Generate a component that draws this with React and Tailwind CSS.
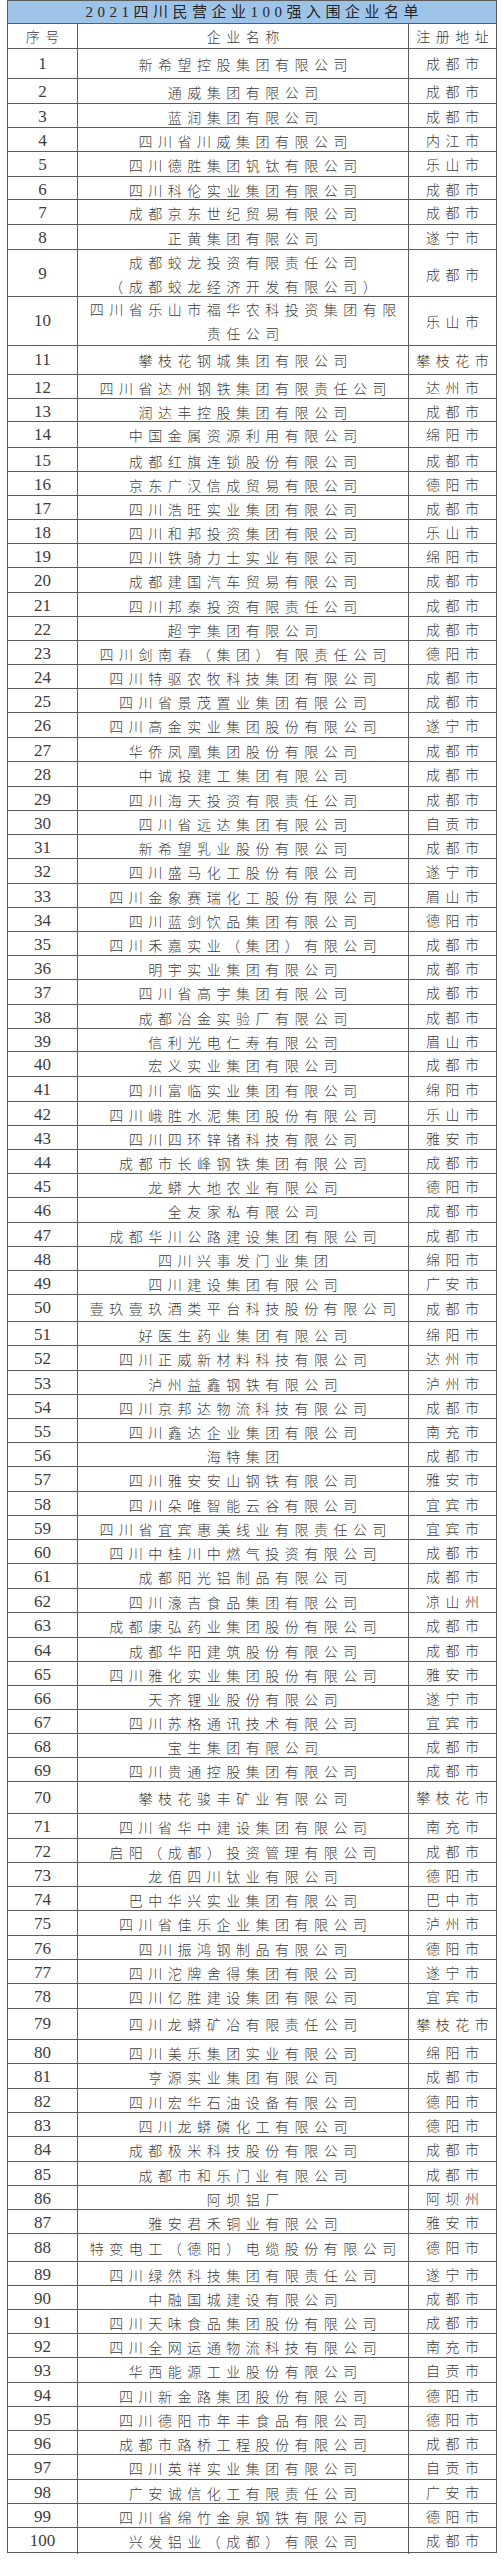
import React from "react";

const Y = [0, 24, 49, 79, 104, 128, 152, 177, 200, 225, 250, 297, 346, 375, 399, 422, 448, 472, 496, 520, 544, 568, 593, 617, 641, 665, 689, 713, 738, 762, 787, 811, 835, 859, 884, 908, 932, 956, 980, 1005, 1029, 1052, 1077, 1102, 1126, 1150, 1174, 1198, 1223, 1247, 1271, 1295, 1322, 1346, 1371, 1395, 1419, 1443, 1467, 1492, 1516, 1540, 1564, 1589, 1613, 1638, 1662, 1686, 1710, 1734, 1758, 1782, 1814, 1839, 1863, 1887, 1911, 1936, 1960, 1984, 2009, 2040, 2064, 2089, 2113, 2137, 2162, 2186, 2210, 2234, 2262, 2286, 2310, 2334, 2358, 2383, 2407, 2431, 2455, 2480, 2504, 2528, 2553];

const ROWS = [
  ["新希望控股集团有限公司", "成都市"],
  ["通威集团有限公司", "成都市"],
  ["蓝润集团有限公司", "成都市"],
  ["四川省川威集团有限公司", "内江市"],
  ["四川德胜集团钒钛有限公司", "乐山市"],
  ["四川科伦实业集团有限公司", "成都市"],
  ["成都京东世纪贸易有限公司", "成都市"],
  ["正黄集团有限公司", "遂宁市"],
  [["成都蛟龙投资有限责任公司", "（成都蛟龙经济开发有限公司）"], "成都市"],
  [["四川省乐山市福华农科投资集团有限", "责任公司"], "乐山市"],
  ["攀枝花钢城集团有限公司", "攀枝花市"],
  ["四川省达州钢铁集团有限责任公司", "达州市"],
  ["润达丰控股集团有限公司", "成都市"],
  ["中国金属资源利用有限公司", "绵阳市"],
  ["成都红旗连锁股份有限公司", "成都市"],
  ["京东广汉信成贸易有限公司", "德阳市"],
  ["四川浩旺实业集团有限公司", "成都市"],
  ["四川和邦投资集团有限公司", "乐山市"],
  ["四川铁骑力士实业有限公司", "绵阳市"],
  ["成都建国汽车贸易有限公司", "成都市"],
  ["四川邦泰投资有限责任公司", "成都市"],
  ["超宇集团有限公司", "成都市"],
  ["四川剑南春（集团）有限责任公司", "德阳市"],
  ["四川特驱农牧科技集团有限公司", "成都市"],
  ["四川省景茂置业集团有限公司", "成都市"],
  ["四川高金实业集团股份有限公司", "遂宁市"],
  ["华侨凤凰集团股份有限公司", "成都市"],
  ["中诚投建工集团有限公司", "成都市"],
  ["四川海天投资有限责任公司", "成都市"],
  ["四川省远达集团有限公司", "自贡市"],
  ["新希望乳业股份有限公司", "成都市"],
  ["四川盛马化工股份有限公司", "遂宁市"],
  ["四川金象赛瑞化工股份有限公司", "眉山市"],
  ["四川蓝剑饮品集团有限公司", "德阳市"],
  ["四川禾嘉实业（集团）有限公司", "成都市"],
  ["明宇实业集团有限公司", "成都市"],
  ["四川省高宇集团有限公司", "成都市"],
  ["成都冶金实验厂有限公司", "成都市"],
  ["信利光电仁寿有限公司", "眉山市"],
  ["宏义实业集团有限公司", "成都市"],
  ["四川富临实业集团有限公司", "绵阳市"],
  ["四川峨胜水泥集团股份有限公司", "乐山市"],
  ["四川四环锌锗科技有限公司", "雅安市"],
  ["成都市长峰钢铁集团有限公司", "成都市"],
  ["龙蟒大地农业有限公司", "德阳市"],
  ["全友家私有限公司", "成都市"],
  ["成都华川公路建设集团有限公司", "成都市"],
  ["四川兴事发门业集团", "绵阳市"],
  ["四川建设集团有限公司", "广安市"],
  ["壹玖壹玖酒类平台科技股份有限公司", "成都市"],
  ["好医生药业集团有限公司", "绵阳市"],
  ["四川正威新材料科技有限公司", "达州市"],
  ["泸州益鑫钢铁有限公司", "泸州市"],
  ["四川京邦达物流科技有限公司", "成都市"],
  ["四川鑫达企业集团有限公司", "南充市"],
  ["海特集团", "成都市"],
  ["四川雅安安山钢铁有限公司", "雅安市"],
  ["四川朵唯智能云谷有限公司", "宜宾市"],
  ["四川省宜宾惠美线业有限责任公司", "宜宾市"],
  ["四川中桂川中燃气投资有限公司", "成都市"],
  ["成都阳光铝制品有限公司", "成都市"],
  ["四川濠吉食品集团有限公司", "凉山州"],
  ["成都康弘药业集团股份有限公司", "成都市"],
  ["成都华阳建筑股份有限公司", "成都市"],
  ["四川雅化实业集团股份有限公司", "雅安市"],
  ["天齐锂业股份有限公司", "遂宁市"],
  ["四川苏格通讯技术有限公司", "宜宾市"],
  ["宝生集团有限公司", "成都市"],
  ["四川贵通控股集团有限公司", "成都市"],
  ["攀枝花骏丰矿业有限公司", "攀枝花市"],
  ["四川省华中建设集团有限公司", "南充市"],
  ["启阳（成都）投资管理有限公司", "成都市"],
  ["龙佰四川钛业有限公司", "德阳市"],
  ["巴中华兴实业集团有限公司", "巴中市"],
  ["四川省佳乐企业集团有限公司", "泸州市"],
  ["四川振鸿钢制品有限公司", "德阳市"],
  ["四川沱牌舍得集团有限公司", "遂宁市"],
  ["四川亿胜建设集团有限公司", "宜宾市"],
  ["四川龙蟒矿冶有限责任公司", "攀枝花市"],
  ["四川美乐集团实业有限公司", "绵阳市"],
  ["亨源实业集团有限公司", "成都市"],
  ["四川宏华石油设备有限公司", "德阳市"],
  ["四川龙蟒磷化工有限公司", "德阳市"],
  ["成都极米科技股份有限公司", "成都市"],
  ["成都市和乐门业有限公司", "成都市"],
  ["阿坝铝厂", "阿坝州"],
  ["雅安君禾铜业有限公司", "雅安市"],
  ["特变电工（德阳）电缆股份有限公司", "德阳市"],
  ["四川绿然科技集团有限责任公司", "遂宁市"],
  ["中融国城建设有限公司", "成都市"],
  ["四川天味食品集团股份有限公司", "成都市"],
  ["四川全网运通物流科技有限公司", "南充市"],
  ["华西能源工业股份有限公司", "自贡市"],
  ["四川新金路集团股份有限公司", "德阳市"],
  ["四川德阳市年丰食品有限公司", "德阳市"],
  ["成都市路桥工程股份有限公司", "成都市"],
  ["四川英祥实业集团有限公司", "自贡市"],
  ["广安诚信化工有限责任公司", "广安市"],
  ["四川省绵竹金泉钢铁有限公司", "德阳市"],
  ["兴发铝业（成都）有限公司", "成都市"],
];

const CJK = "font-['Noto_Sans_CJK_SC',sans-serif]";

function Row({ h, num, name, city, header }) {
  const cjk =
    "text-[14px] tracking-[5.5px] pl-[5.5px] text-[#3d3d3d] font-light " + CJK;
  return (
    <div
      className="grid grid-cols-[70px_331px_1fr] border-b border-[#5c5c5c]"
      style={{ height: h }}
    >
      <div
        className={
          "flex items-center justify-center border-r border-[#5c5c5c] " +
          (header
            ? cjk
            : "text-[17px] text-[#3d3d3d] font-['Liberation_Serif',serif]")
        }
      >
        {num}
      </div>
      <div
        className={
          "flex flex-col items-center justify-center border-r border-[#5c5c5c] text-center leading-[24px] " +
          cjk
        }
      >
        {Array.isArray(name) ? name.map((l, i) => <span key={i}>{l}</span>) : name}
      </div>
      <div className={"flex items-center justify-center " + cjk}>{city}</div>
    </div>
  );
}

export default function App() {
  return (
    <div className="w-[504px] h-[2560px] bg-white pl-[7px]">
      <div className="w-[490px] border-l border-r border-[#5c5c5c]">
        <div
          className="flex items-center justify-center bg-[#9dc3e6] border-t border-b border-[#5c5c5c] text-[15px] tracking-[4.5px] pl-[4.5px] text-[#262626] font-['Liberation_Serif','Noto_Sans_CJK_SC',serif]"
          style={{ height: Y[1] - Y[0] }}
        >
          2021四川民营企业100强入围企业名单
        </div>
        <Row h={Y[2] - Y[1]} num="序号" name="企业名称" city="注册地址" header />
        {ROWS.map((r, i) => (
          <Row
            key={i}
            h={Y[i + 3] - Y[i + 2]}
            num={i + 1}
            name={r[0]}
            city={r[1]}
          />
        ))}
      </div>
    </div>
  );
}
